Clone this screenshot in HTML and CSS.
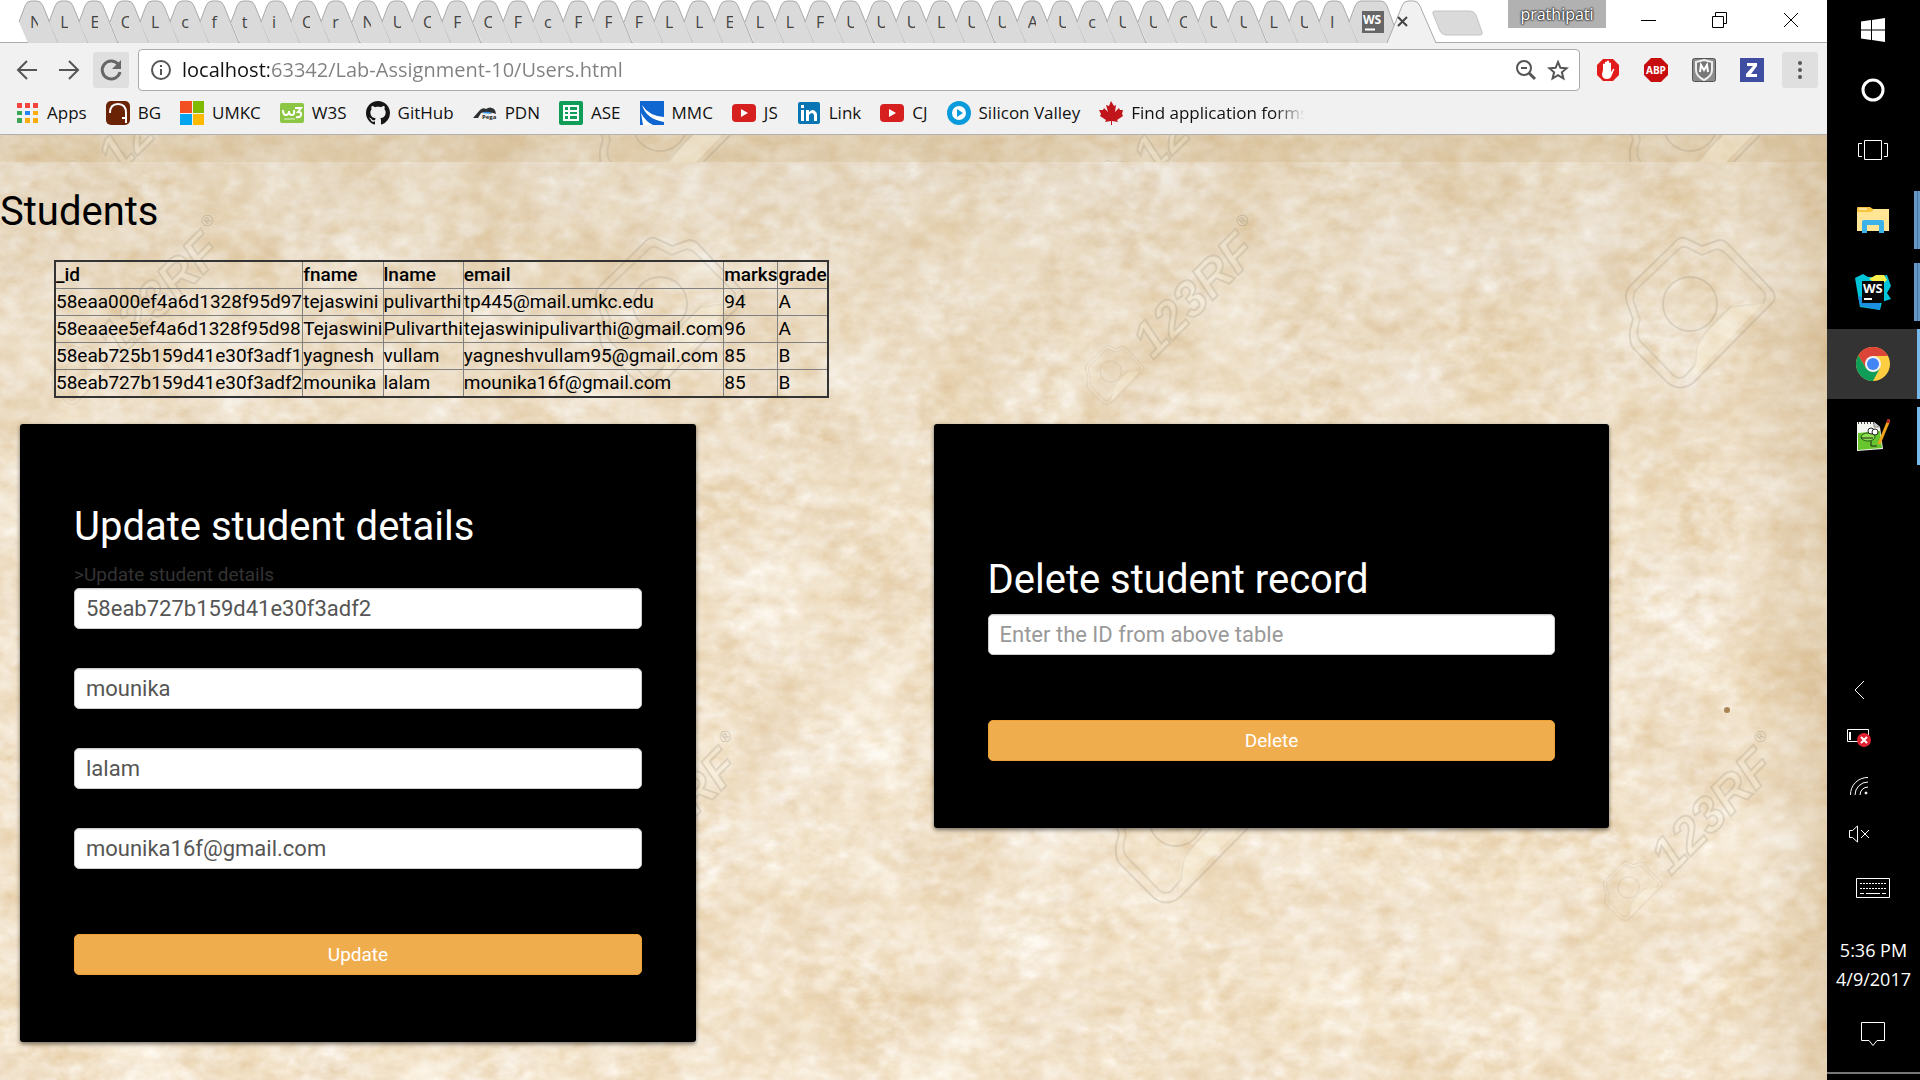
FILE: index.html
```html
<!DOCTYPE html>
<html lang="en">
<head>
<meta charset="utf-8">
<title>Users</title>
<link rel="stylesheet" href="styles.css">
</head>
<body>
<svg class="defs" aria-hidden="true">
  <defs>
    <symbol id="tab-shape" viewBox="0 0 50 43" overflow="visible">
      <path d="M20 43 11 22 17 6Q19 1 23 1H29Q33 1 35 6L50 43Z" fill="#dadada"/>
      <path d="M11 22 17 6Q19 1 23 1H29Q33 1 35 6L50 43" fill="none" stroke="#aaa"/>
    </symbol>
    <symbol id="youtube" viewBox="0 0 24 24">
      <rect y="3" width="24" height="18" rx="4" fill="#d5201f"/><path d="M9 8v8l7-4z" fill="#fff"/>
    </symbol>
    <symbol id="camera" viewBox="0 0 152 152" overflow="visible">
      <path d="M49 6Q55-2 62 2L77 9 94 3Q100 3 104 8L147 53Q151 58 149 64L68 146Q55 155 43 146L9 112Q4 107 5 93L8 82 2 66Q-1 56 4 50Z" fill="none" stroke="#8d8672" stroke-width="2" stroke-opacity=".22"/>
      <path d="M54 12Q58 8 63 11L77 18 92 12 98 14 139 55Q142 60 138 66L106 70 Q76 98 72 110L70 128 60 139Q55 143 49 139L16 105Q11 100 13 90L15 82 9 66Q7 58 11 53Z" fill="none" stroke="#8d8672" stroke-width="2" stroke-opacity=".18"/>
      <path d="M106 70Q115 64 138 66L68 140 70 110Q76 98 106 70Z" fill="#fff8e4" fill-opacity=".35"/>
      <circle cx="65" cy="67" r="27" fill="none" stroke="#8d8672" stroke-width="2" stroke-opacity=".22"/>
    </symbol>
    <symbol id="stamp" viewBox="0 0 180 200" overflow="visible">
      <use href="#camera" x="0" y="140" width="60" height="60"/>
      <g transform="rotate(-45 68 155)">
        <text class="stamp-text" x="68" y="155">123RF</text>
        <text class="stamp-mark" x="224" y="125">®</text>
      </g>
    </symbol>
  </defs>
</svg>

<div class="screen">
<div class="browser">
  <header class="tabstrip">
    <div class="tabs" id="tabs"></div>
    <button class="tab tab-ws" aria-label="WebStorm tab">
      <svg width="60" height="43" viewBox="0 0 60 43"><path d="M20 43 11 22 17 6Q19 1 23 1H43Q47 1 49 6L60 36V43Z" fill="#dadada"/><path d="M11 22 17 6Q19 1 23 1H43Q47 1 49 6L60 36" fill="none" stroke="#aaa"/><rect x="24" y="11" width="22" height="22" fill="#666"/><text x="25" y="24" class="ws-small">WS</text><path d="M27 29.500h10" stroke="#fff" stroke-width="2"/></svg>
    </button>
    <button class="tab-active" aria-label="Close tab">
      <svg width="50" height="44" viewBox="0 0 50 44"><path d="M0 43 15 6Q17 1 21 1H27Q31 1 33 6L49 43V44H0Z" fill="#f1f1f1"/><path d="M0 43 15 6Q17 1 21 1H27Q31 1 33 6L49 43" fill="none" stroke="#aaa"/><path d="M11 17l9 9M20 17l-9 9" stroke="#444" stroke-width="2"/></svg>
    </button>
    <button class="new-tab" aria-label="New tab">
      <svg width="52" height="26" viewBox="0 0 52 26"><path d="M3 1H38Q42 1 44 5L50 22Q51 25 48 25H14Q10 25 8 21L1 4Q0 1 3 1Z" fill="#dadada" stroke="#c4c4c4"/></svg>
    </button>
    <div class="window-controls">
      <button class="profile">prathipati</button>
      <button aria-label="Minimize"><svg width="16" height="16"><path d="M0 8.500h15" stroke="#000"/></svg></button>
      <button aria-label="Restore"><svg width="16" height="16" fill="none" stroke="#000"><path d="M.5 4.500h11v11H.5zM3.500 4V.5h11v11H12"/></svg></button>
      <button aria-label="Close"><svg width="16" height="16" stroke="#000"><path d="M1 1l14 14M15 1L1 15"/></svg></button>
    </div>
  </header>

  <div class="toolbar">
    <div class="nav">
      <button aria-label="Back"><svg width="22" height="22" fill="none" stroke="#555" stroke-width="2"><path d="M21 11H2M11 2L2 11l9 9"/></svg></button>
      <button aria-label="Forward"><svg width="22" height="22" fill="none" stroke="#555" stroke-width="2"><path d="M1 11h19M11 2l9 9-9 9"/></svg></button>
      <button class="shaded" aria-label="Reload"><svg width="24" height="24" fill="none" stroke="#666" stroke-width="3"><path d="M19 6A9 9 0 1 0 21 14"/><path d="M22 2v9h-9z" fill="#666" stroke="none"/></svg></button>
    </div>
    <div class="omnibox">
      <svg width="22" height="22" fill="none" stroke="#555" stroke-width="2"><circle cx="11" cy="11" r="9"/><path d="M11 10v6M11 6v2"/></svg>
      <input class="address" aria-label="Address" value="localhost:63342/Lab-Assignment-10/Users.html">
      <svg width="22" height="22" fill="none" stroke="#555" stroke-width="2"><circle cx="9" cy="9" r="7"/><path d="M6 9h6"/><path d="M14 14l6 6" stroke-width="3"/></svg>
      <svg width="22" height="22" fill="none" stroke="#555" stroke-width="2"><path d="M11 3l2.400 5.800 6.200.5-4.700 4 1.500 6.200L11 16.200l-5.400 3.300 1.500-6.200-4.700-4 6.200-.5z"/></svg>
    </div>
    <div class="extensions">
      <button aria-label="AdBlock"><svg width="24" height="24"><path d="M7 1h10l6 6v10l-6 6H7l-6-6V7z" fill="#e21b1b"/><path d="M7 12V6q1-1 2 0v5V4q1-1 2 0v7V3q1-1 2 0v8V5q1-1 2 0v9l2-3q2-1 1 1l-3 7q-1 2-4 2-5 0-5-5z" fill="#fff"/></svg></button>
      <button aria-label="Adblock Plus"><svg width="24" height="24"><path d="M7 0h10l7 7v10l-7 7H7l-7-7V7z" fill="#c70d0d"/><text x="2" y="16" class="abp">ABP</text></svg></button>
      <button aria-label="McAfee"><svg width="24" height="24"><rect x=".5" y=".5" width="23" height="23" rx="2" fill="#8b8b8b" stroke="#555"/><path d="M12 2l8 2v8q0 6-8 10Q4 18 4 12V4z" fill="#777" stroke="#eee" stroke-width="2"/><path d="M8 14l1-7 3 5 3-5 1 7" fill="none" stroke="#fff" stroke-width="2"/></svg></button>
      <button aria-label="Zotero"><svg width="24" height="24"><rect width="24" height="24" fill="#3f4ea0"/><path d="M7 5h10v3l-6 8h6v3H6v-3l7-8H7z" fill="#fff"/></svg></button>
      <button class="shaded" aria-label="Menu"><svg width="24" height="24" fill="#555"><circle cx="12" cy="5" r="2"/><circle cx="12" cy="12" r="2"/><circle cx="12" cy="19" r="2"/></svg></button>
    </div>
  </div>

  <nav class="bookmarks" aria-label="Bookmarks">
    <a href="#"><svg width="24" height="24"><path d="M2 2h5v5H2zM10 2h5v5h-5zM18 2h5v5h-5z" fill="#f4453c"/><path d="M2 10h5v4H2zM2 17h5v5H2z" fill="#3aa757"/><path d="M10 10h5v4h-5z" fill="#2a85f4"/><path d="M18 10h5v4h-5zM18 17h5v5h-5zM10 17h5v5h-5z" fill="#fbab0a"/></svg>Apps</a>
    <a href="#"><svg width="24" height="24"><rect width="24" height="24" rx="5" fill="#6a2305"/><path d="M4 12Q4 3 12 3q8 0 8 9v10" fill="none" stroke="#fff" stroke-width="2"/><path d="M16 16h3v2h-3z" fill="#fff"/></svg>BG</a>
    <a href="#"><svg width="24" height="24"><path d="M0 0h12v12H0z" fill="#f25022"/><path d="M13 0h11v12H13z" fill="#7fba00"/><path d="M0 13h12v11H0z" fill="#00a4ef"/><path d="M13 13h11v11H13z" fill="#ffb900"/></svg>UMKC</a>
    <a href="#"><svg width="24" height="24"><rect y="2" width="24" height="20" rx="2" fill="#8cc644"/><path d="M3 9q0 5 3 5t3-4q0 4 3 4t2-5M15 7h6l-3 4q4 0 3 3t-5 2" fill="none" stroke="#fff" stroke-width="2"/><path d="M4 18h11" stroke="#e6f3d0"/></svg>W3S</a>
    <a href="#"><svg width="24" height="24" viewBox="0 0 16 16"><path fill="#171515" d="M8 0C3.580 0 0 3.580 0 8c0 3.540 2.290 6.530 5.470 7.590.4.070.55-.17.55-.38 0-.19-.01-.82-.01-1.490-2.010.37-2.530-.49-2.690-.94-.09-.23-.48-.94-.82-1.130-.28-.15-.68-.52-.01-.53.63-.01 1.080.58 1.230.82.72 1.210 1.870.87 2.330.66.07-.52.28-.87.51-1.070-1.780-.2-3.640-.89-3.640-3.950 0-.87.31-1.590.82-2.150-.08-.2-.36-1.020.08-2.120 0 0 .67-.21 2.200.82.64-.18 1.320-.27 2-.27s1.360.09 2 .27c1.530-1.040 2.200-.82 2.200-.82.44 1.100.16 1.920.08 2.120.51.56.82 1.270.82 2.150 0 3.070-1.870 3.750-3.650 3.950.29.25.54.73.54 1.480 0 1.070-.01 1.930-.01 2.200 0 .21.15.46.55.38A8.010 8.010 0 0 0 16 8c0-4.420-3.580-8-8-8z"/></svg>GitHub</a>
    <a href="#"><svg width="24" height="24"><path d="M0 17l7-8q3-3 6-1 4-3 8 0 2 2 2 5l-3-1-8-1-4 1-3 5z" fill="#2c3033"/><path d="M9 12q6-3 10 1z" fill="#2f8fe0"/><text x="9" y="18" class="pega">Pega</text></svg>PDN</a>
    <a href="#"><svg width="24" height="24"><rect width="24" height="24" rx="2" fill="#109d58"/><path d="M5 5h14v14H5zM5 10h14M5 14h14M10 5v14" fill="none" stroke="#fff" stroke-width="2"/></svg>ASE</a>
    <a href="#"><svg width="24" height="24"><rect width="24" height="24" fill="#0f66d0"/><path d="M2 4Q9 15 24 16v5Q6 18 2 4zM1 12q5 9 12 12H3z" fill="#fff"/></svg>MMC</a>
    <a href="#"><svg width="24" height="24"><use href="#youtube"/></svg>JS</a>
    <a href="#"><svg width="24" height="24"><rect x="1" y="1" width="22" height="22" rx="2" fill="#0976b4"/><path d="M4 9h3v11H4zM4 4h3v3H4zM9 9h3v2q4-4 7 0 1 1 1 3v6h-3v-6q-2-4-5 0v6H9z" fill="#fff"/></svg>Link</a>
    <a href="#"><svg width="24" height="24"><use href="#youtube"/></svg>CJ</a>
    <a href="#"><svg width="24" height="24"><circle cx="12" cy="12" r="12" fill="#0a9bdc"/><circle cx="12" cy="12" r="7" fill="#fff"/><path d="M10 8v8l6-4z" fill="#0a9bdc"/></svg>Silicon Valley</a>
    <a class="fading" href="#"><svg width="24" height="24"><path d="M12 0l3 5 2-1-1 7 4-4 1 2 3 0-1 4 1 2-6 4 1 2-6-1v4h-1v-4l-6 1 1-2-6-4 1-2-2-4 4 0 1-2 4 4-2-7 3 1z" fill="#c0151a"/></svg>Find application forms</a>
  </nav>

  <main class="page">
    <svg class="parchment" aria-hidden="true">
      <defs>
        <filter id="paper" x="0" y="0" width="100%" height="100%" color-interpolation-filters="sRGB">
          <feTurbulence type="fractalNoise" baseFrequency=".011 .012" numOctaves="3" seed="21" result="blotches"/>
          <feTurbulence type="fractalNoise" baseFrequency=".05 .07" numOctaves="4" seed="5" result="grain"/>
          <feComposite in="blotches" in2="grain" operator="arithmetic" k2=".5" k3=".5"/>
          <feColorMatrix values=".16 .06 0 0 .84  .3 .08 0 0 .705  .52 .08 0 0 .51  0 0 0 0 1"/>
        </filter>
        <linearGradient id="age" x1="0" y1="0" x2="0" y2="1">
          <stop offset="0" stop-color="#a09070" stop-opacity=".16"/><stop offset=".5" stop-color="#c8b080" stop-opacity=".04"/><stop offset="1" stop-color="#f0d09a" stop-opacity=".06"/>
        </linearGradient>
        <linearGradient id="edge"><stop offset=".95" stop-color="#b08a50" stop-opacity="0"/><stop offset="1" stop-color="#b08a50" stop-opacity=".25"/></linearGradient>
      </defs>
      <rect width="100%" height="100%" filter="url(#paper)"/>
      <rect width="100%" height="100%" fill="url(#age)"/>
      <rect width="100%" height="100%" fill="url(#edge)"/>
      <svg width="100%" height="27">
        <rect width="100%" height="27" fill="#c6a468" fill-opacity=".2"/>
        <use href="#stamp" x="50" y="-115" width="180" height="200"/>
        <use href="#camera" x="595" y="-78" width="152" height="152"/>
        <use href="#stamp" x="1085" y="-115" width="180" height="200"/>
        <use href="#camera" x="1625" y="-78" width="152" height="152"/>
      </svg>
      <use href="#stamp" x="50" y="70" width="180" height="200"/>
      <use href="#camera" x="595" y="102" width="152" height="152"/>
      <use href="#stamp" x="1085" y="70" width="180" height="200"/>
      <use href="#camera" x="1625" y="102" width="152" height="152"/>
      <use href="#stamp" x="568" y="586" width="180" height="200"/>
      <use href="#camera" x="1111" y="617" width="152" height="152"/>
      <use href="#stamp" x="1603" y="586" width="180" height="200"/>
      <circle cx="1727" cy="575" r="3" fill="#8a5a20" fill-opacity=".7"/>
    </svg>

    <h1>Students</h1>
    <table class="students">
      <thead><tr><th>_id</th><th>fname</th><th>lname</th><th>email</th><th>marks</th><th>grade</th></tr></thead>
      <tbody>
        <tr><td>58eaa000ef4a6d1328f95d97</td><td>tejaswini</td><td>pulivarthi</td><td>tp445@mail.umkc.edu</td><td>94</td><td>A</td></tr>
        <tr><td>58eaaee5ef4a6d1328f95d98</td><td>Tejaswini</td><td>Pulivarthi</td><td>tejaswinipulivarthi@gmail.com</td><td>96</td><td>A</td></tr>
        <tr><td>58eab725b159d41e30f3adf1</td><td>yagnesh</td><td>vullam</td><td>yagneshvullam95@gmail.com</td><td>85</td><td>B</td></tr>
        <tr><td>58eab727b159d41e30f3adf2</td><td>mounika</td><td>lalam</td><td>mounika16f@gmail.com</td><td>85</td><td>B</td></tr>
      </tbody>
    </table>

    <div class="forms">
      <form class="card">
        <h2>Update student details</h2>
        <p>&gt;Update student details</p>
        <div class="fields">
          <input aria-label="Student ID" value="58eab727b159d41e30f3adf2">
          <input aria-label="First name" value="mounika">
          <input aria-label="Last name" value="lalam">
          <input aria-label="Email" value="mounika16f@gmail.com">
        </div>
        <button type="button">Update</button>
      </form>
      <form class="card card-delete">
        <h2>Delete student record</h2>
        <div class="fields">
          <input aria-label="Student ID to delete" placeholder="Enter the ID from above table">
        </div>
        <button type="button">Delete</button>
      </form>
    </div>
  </main>
</div>

<aside class="taskbar">
  <div class="system">
    <button aria-label="Start"><svg width="24" height="24" fill="#fff"><path d="M0 3.500L10 2v9.500H0zM11 2l13-2v11.500H11zM0 12.500h10V22L0 20.500zM11 12.500h13V24l-13-2z"/></svg></button>
    <button aria-label="Cortana"><svg width="24" height="24" fill="none" stroke="#fff" stroke-width="3"><circle cx="12" cy="12" r="10"/></svg></button>
    <button aria-label="Task view"><svg width="32" height="20" fill="none" stroke="#fff"><path d="M7.500.5h17v19h-17zM5 3.500H1.500v13H5M27 3.500h3.500v13H27"/></svg></button>
  </div>
  <div class="apps">
    <button class="running stacked" aria-label="File Explorer"><svg width="32" height="28"><path d="M0 2q0-1 1-1h12l3 2h16v22H0z" fill="#f8c63e"/><path d="M0 6h14l3-3h15v22H0z" fill="#ffe594"/><path d="M5 27V16q0-2 2-2h18q2 0 2 2v11h-5v-8H10v8z" fill="#3bb2ea"/><path d="M2 3h8" stroke="#fff"/></svg></button>
    <button class="running stacked" aria-label="WebStorm"><svg width="36" height="36"><path d="M0 4l8-4 5 3h10l9-2 4 11-4 7 4 6-9 3-2 8-20-3z" fill="#00c4d8"/><path d="M14 5l7-4h8l3 5-7 6z" fill="#f9ed4b"/><path d="M3 22l22 5v9L5 32z" fill="#1b8fe0"/><rect x="7" y="7" width="22" height="22" fill="#080808"/><text x="8" y="19" class="ws-large">WS</text><path d="M9 25h8" stroke="#fff" stroke-width="2"/></svg></button>
    <button class="running current" aria-label="Chrome"><svg width="34" height="34" viewBox="0 0 34 34"><circle cx="17" cy="17" r="17" fill="#ffcd40"/><path d="M2.300 8.500A17 17 0 0 1 32 9H17L10 21z" fill="#db4437"/><path d="M2.300 8.500A17 17 0 0 0 17 34l7-13-7 4-7-4z" fill="#0f9d58"/><circle cx="17" cy="17" r="8" fill="#f1f1f1"/><circle cx="17" cy="17" r="6" fill="#4285f4"/></svg></button>
    <button class="running" aria-label="Notepad++"><svg width="34" height="34"><path d="M1 3h17l6 5 3 22-26 2z" fill="#f4f7ef"/><path d="M2 14l22-2 2 17-24 2z" fill="#67c52d"/><path d="M2 4h16" stroke="#444" stroke-width="2" stroke-dasharray="1 2"/><path d="M18 3v5h6" fill="#ccc" stroke="#888"/><ellipse cx="12" cy="18" rx="7" ry="4" fill="#8ee04e" stroke="#205d15"/><circle cx="15" cy="12" r="3" fill="#fff" stroke="#222"/><circle cx="19" cy="13" r="3" fill="#fff" stroke="#222"/><path d="M5 19h12M15 22v5h6" fill="none" stroke="#222"/><path d="M33 1L23 25" stroke="#f0a51c" stroke-width="3"/><path d="M33 0l-1 4" stroke="#b52a22" stroke-width="3"/></svg></button>
  </div>
  <div class="tray">
    <button aria-label="Show hidden icons"><svg width="12" height="20" fill="none" stroke="#fff"><path d="M11 1L2 10l9 9"/></svg></button>
    <button aria-label="Battery"><svg width="26" height="20"><path d="M1.500 1.500h21v12h-21z" fill="none" stroke="#fff"/><path d="M4 4v8" stroke="#fff" stroke-width="2"/><circle cx="18" cy="12" r="7" fill="#e02231"/><path d="M15 9l6 6M21 9l-6 6" stroke="#fff" stroke-width="2"/></svg></button>
    <button aria-label="Network"><svg width="20" height="20" fill="none" stroke="#fff"><path d="M1.500 19A17 17 0 0 1 19 1.500M6 19A13 13 0 0 1 19 6M11 19a8 8 0 0 1 8-8" /><circle cx="17" cy="17" r="1" fill="#fff"/></svg></button>
    <button aria-label="Volume"><svg width="22" height="20" fill="none" stroke="#fff"><path d="M1.500 6.500h3L9.500 2v16L4.500 13.500h-3zM13 6l8 8M21 6l-8 8"/></svg></button>
  </div>
  <button class="keyboard" aria-label="Touch keyboard"><svg width="34" height="20" fill="none" stroke="#fff"><path d="M.5.500h33v19H.5z"/><path d="M4 5.500h26M4 10.500h26" stroke-dasharray="2 1"/><path d="M4 15.500h4M10 15.500h14M26 15.500h4"/></svg></button>
  <div class="clock"><span>5:36 PM</span><span>4/9/2017</span></div>
  <button class="notifications" aria-label="Notifications"><svg width="26" height="26" fill="none" stroke="#fff"><path d="M1.500 1.500h23v18H17l-4 5-4-5H1.500z"/></svg></button>
</aside>
</div>
<script src="tabs.js"></script>
</body>
</html>
```
FILE: tabs.js
```js
const titles = "NLECLcftiCrNUCFCFcFFFLLELLFUUULUUAUcUUCUULUI";
document.getElementById("tabs").innerHTML = [...titles].map(t =>
  `<button class="tab"><svg width="50" height="43"><use href="#tab-shape"/></svg><span>${t}</span></button>`).join("");
```
FILE: styles.css
```css
* { box-sizing: border-box; }
body { margin: 0; font-family: Roboto, "Liberation Sans", sans-serif; }
button { border: 0; padding: 0; margin: 0; background: none; font: inherit; color: inherit; }
svg { display: block; flex: none; }
.defs { position: absolute; width: 0; height: 0; }
.screen { display: flex; min-height: 100vh; }
.browser { flex: 1; min-width: 0; display: flex; flex-direction: column; font-family: "Open Sans", "Noto Sans", sans-serif; }

/* Tab strip */
.tabstrip { display: flex; height: 43px; background: #fff; box-shadow: inset 0 -1px #aaa; padding-left: 8px; }
.tabs { display: flex; flex: 0 1 1330px; min-width: 0; }
.tab { flex: 1 1 0; min-width: 0; position: relative; height: 43px; }
.tab svg { position: absolute; left: 0; top: 0; overflow: visible; }
.tab span { position: absolute; left: 22px; top: 11px; width: 8px; overflow: hidden; text-align: left; font-size: 16px; line-height: 22px; color: #444; }
.tab-ws { flex: 0 0 49px; }
.tab-active { flex: none; width: 50px; height: 44px; position: relative; }
.new-tab { flex: none; align-self: flex-start; margin: 10px 0 0 -5px; }
.window-controls { flex: 1; display: flex; justify-content: flex-end; align-items: flex-start; gap: 55px; padding-right: 28px; }
.window-controls button { margin-top: 12px; }
.window-controls .profile { width: 98px; height: 28px; margin: 0 -20px 0 0; background: #b1b1b1; color: #fff; font-size: 16px; line-height: 26px; text-shadow: 0 0 2px #222, 0 0 2px #222, 0 0 2px #222; }
.ws-small { font: bold 12px "Open Sans", sans-serif; fill: #fff; }
.ws-large { font: bold 13px "Open Sans", sans-serif; fill: #fff; }
.abp { font: bold 10px "Open Sans", sans-serif; fill: #fff; }
.pega { font: bold 6px "Open Sans", sans-serif; fill: #222; }

/* Toolbar */
.toolbar { display: flex; align-items: center; gap: 9px; height: 53px; padding: 0 9px; background: #f1f1f1; }
.nav, .extensions { display: flex; align-items: center; }
.nav { gap: 6px; }
.nav button, .extensions button { width: 36px; height: 36px; display: grid; place-items: center; }
.nav .shaded, .extensions .shaded { background: #dfdfdf; border-radius: 3px; }
.extensions { gap: 12px; }
.omnibox { flex: 1; display: flex; align-items: center; gap: 10px; height: 42px; padding: 0 10px 0 11px; background: #fff; border: 1px solid #aaa; border-radius: 4px; }
.address { flex: 1; min-width: 0; height: 38px; border: 0; padding: 0; outline: 0; font: 20px "Open Sans", sans-serif; color: transparent; background: linear-gradient(90deg, #111 87px, #808080 87px); background-clip: text; -webkit-background-clip: text; }
.extensions { margin-left: 1px; }

/* Bookmarks */
.bookmarks { display: flex; gap: 19px; height: 39px; padding: 0 15px 5px; background: #f1f1f1; border-bottom: 1px solid #b0b0b0; font-size: 17px; line-height: 22px; }
.bookmarks a { display: flex; align-items: center; gap: 8px; color: #111; text-decoration: none; white-space: nowrap; }
.bookmarks .fading { width: 206px; overflow: hidden; mask-image: linear-gradient(90deg, #000 85%, transparent); }

/* Page */
.page { position: relative; flex: 1; padding: 55px 0 38px; overflow: hidden; background: #f3e5c9; color: #000; font-family: Roboto, "Liberation Sans", sans-serif; font-size: 19px; }
.parchment { position: absolute; inset: 0; width: 100%; height: 100%; }
.stamp-text { font: italic bold 50px "Liberation Sans", sans-serif; fill: #fff8e4; fill-opacity: .2; stroke: #8d8672; stroke-width: 2px; stroke-opacity: .22; }
.stamp-mark { font: 16px "Liberation Sans", sans-serif; fill: #8d8672; fill-opacity: .4; }
.page h1, .students, .forms { position: relative; }
h1, h2 { font-size: 40px; line-height: 44px; font-weight: 400; }
h1 { margin: 0 0 26px; }
.students { margin-left: 54px; border: 2px solid #333; border-collapse: collapse; line-height: 26px; }
.students th, .students td { border: 1px solid #808080; padding: 0; text-align: left; }
.students th { font-weight: 500; }
.forms { display: grid; grid-template-columns: 1fr 1fr; align-items: start; margin-top: 26px; }
.card { width: 74%; margin-left: 20px; padding: 81px 54px 67px; background: #000; border-radius: 3px; box-shadow: 0 2px 4px rgba(0, 0, 0, .5); }
.card-delete { padding-top: 134px; }
.card h2 { margin: 0 0 12px; color: #fff; }
.card p { margin: 0; line-height: 27px; color: #333; }
.fields { display: grid; gap: 39px; margin-bottom: 65px; }
.fields input { width: 100%; height: 41px; border: 1px solid #ccc; border-radius: 5px; padding: 0 11px; background: #fff; box-shadow: inset 0 1px 1px rgba(0, 0, 0, .08); color: #555; font: 22px Roboto, sans-serif; }
.fields input::placeholder { color: #999; }
.card button { display: block; width: 100%; height: 41px; border: 1px solid #eea236; border-radius: 5px; background: #f0ad4e; color: #fff; font-size: 19px; }

/* Taskbar */
.taskbar { flex: none; width: 93px; display: flex; flex-direction: column; background: #000; color: #fff; border-bottom: 6px solid #000; box-shadow: inset 0 -2px #777; font-family: "Open Sans", "Noto Sans", sans-serif; }
.taskbar button { display: grid; place-items: center; width: 100%; }
.system button { height: 60px; padding-right: 2px; }
.apps { display: grid; gap: 2px; margin-top: 5px; }
.apps button { height: 70px; padding-right: 2px; background: linear-gradient(#78b9ec, #78b9ec) right / 3px 58px no-repeat; }
.apps .stacked { background: linear-gradient(90deg, #6499c7 3px, #44749c 3px 4px, #6499c7 4px) right / 6px 58px no-repeat; }
.apps .current { background: linear-gradient(#78b9ec, #78b9ec) right / 3px 100% no-repeat, #333; }
.tray { margin-top: auto; width: 64px; }
.tray button { height: 48px; }
.keyboard { height: 60px; }
.taskbar .keyboard, .taskbar .notifications { padding-right: 2px; }
.clock { display: grid; height: 76px; padding-top: 18px; align-content: center; text-align: center; font-size: 18px; line-height: 29px; }
.notifications { height: 80px; }
```
